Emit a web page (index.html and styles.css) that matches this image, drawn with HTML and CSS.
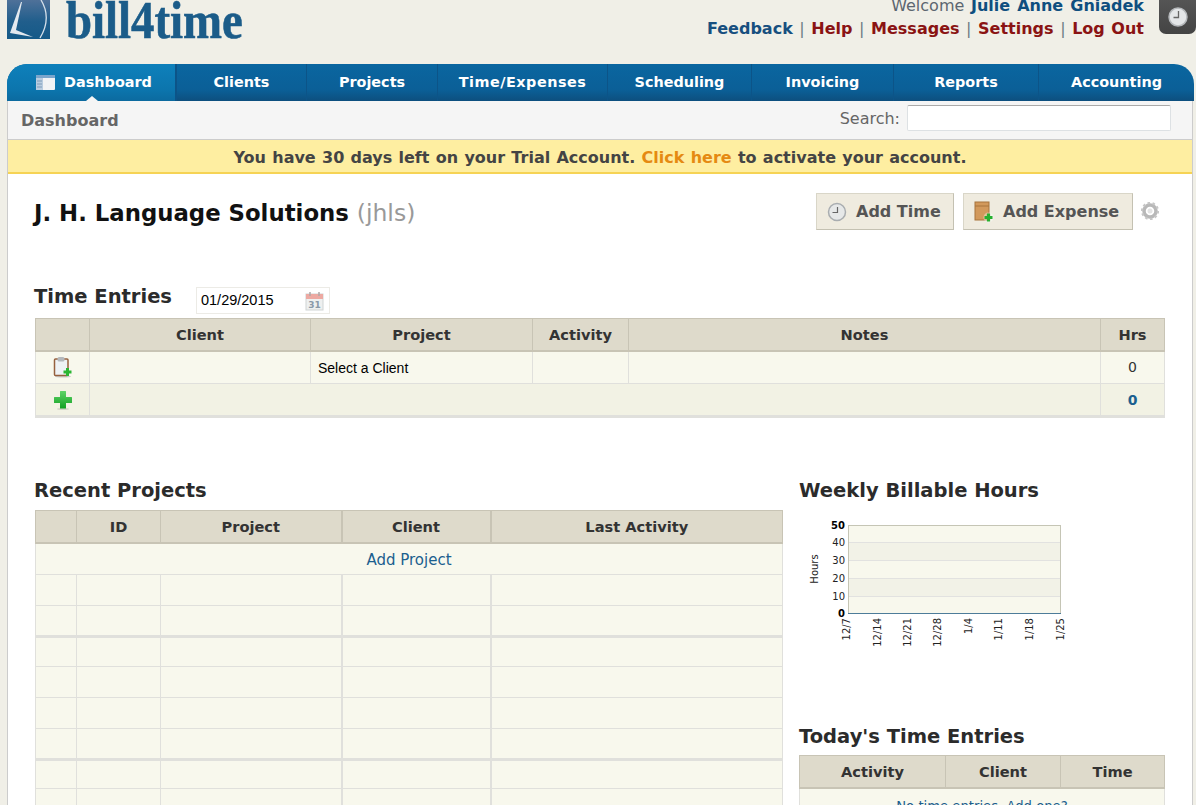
FILE: index.html
```html
<!DOCTYPE html>
<html lang="en">
<head>
<meta charset="utf-8">
<title>Bill4Time Dashboard</title>
<link rel="stylesheet" href="styles.css">
</head>
<body>
<div class="page">
  <header class="top">
    <div class="logo">
      <svg class="logo-mark" width="43" height="39" viewBox="0 0 43 39">
        <defs><linearGradient id="lg" x1="0" y1="0" x2="0" y2="1"><stop offset="0" stop-color="#4f7199"/><stop offset=".55" stop-color="#205e8c"/><stop offset="1" stop-color="#155a88"/></linearGradient></defs>
        <rect width="43" height="39" fill="url(#lg)"/>
        <path d="M34 0Q45 18 33 38" fill="none" stroke="#d5e0ea" stroke-width="1.300"/>
        <path d="M14 2L3 33L26 37L9 30L15 2Z" fill="#e3e9ef"/>
      </svg>
      <span class="logo-text">bill4time</span>
    </div>
    <div class="account">
      <div class="welcome">Welcome <b>Julie Anne Gniadek</b></div>
      <div class="links"><a class="blue">Feedback</a> <i>|</i> <a>Help</a> <i>|</i> <a>Messages</a> <i>|</i> <a>Settings</a> <i>|</i> <a>Log Out</a></div>
    </div>
    <div class="timer">
      <svg width="22" height="22" viewBox="0 0 22 22"><circle cx="11" cy="11" r="9" fill="#e4e6e8" stroke="#b5b8bb" stroke-width="1.500"/><path d="M11.500 5V11.500H6.500" fill="none" stroke="#666" stroke-width="1.300"/></svg>
    </div>
  </header>

  <nav class="tabs">
    <a class="tab active">
      <svg width="19" height="15" viewBox="0 0 19 15"><rect width="19" height="15" rx="1" fill="#f1f3f5"/><rect width="19" height="3" fill="#7aa5cc"/><rect y="3" width="7" height="12" fill="#b8cce0"/><path d="M1 6H6M1 9H6M1 12H6" stroke="#7e9cba"/></svg>
      Dashboard
    </a>
    <a class="tab">Clients</a>
    <a class="tab">Projects</a>
    <a class="tab tab-wide">Time/Expenses</a>
    <a class="tab">Scheduling</a>
    <a class="tab">Invoicing</a>
    <a class="tab">Reports</a>
    <a class="tab">Accounting</a>
  </nav>

  <div class="panel">
    <div class="subbar">
      <span class="crumb">Dashboard</span>
      <label class="search">Search: <input type="text"></label>
    </div>
    <div class="trial">You have 30 days left on your Trial Account. <a>Click here</a> to activate your account.</div>

    <main class="content">
      <div class="title-row">
        <h1>J. H. Language Solutions <span>(jhls)</span></h1>
        <div class="actions">
          <button class="btn btn-time">
            <svg width="20" height="20" viewBox="0 0 20 20"><circle cx="10" cy="10" r="8.500" fill="#e6e8e8" stroke="#a9adb0" stroke-width="1.500"/><path d="M10.500 5V10.500H5.500" fill="none" stroke="#666" stroke-width="1.200"/></svg>
            Add Time
          </button>
          <button class="btn btn-expense">
            <svg width="20" height="22" viewBox="0 0 20 22"><rect x="1" y="1" width="14" height="18" fill="#d2995c" stroke="#a8743c"/><path d="M1 5H15" stroke="#a8743c"/><circle cx="14.500" cy="16.500" r="5" fill="#fff" opacity=".4"/><path d="M14.500 12.500V20.500M10.500 16.500H18.500" stroke="#27b02f" stroke-width="3.200"/></svg>
            Add Expense
          </button>
          <svg class="gear" width="18" height="18" viewBox="0 0 18 18"><circle cx="9" cy="9" r="6" fill="none" stroke="#b8b8b8" stroke-width="3.500"/><circle cx="9" cy="9" r="8" fill="none" stroke="#c6c6c6" stroke-width="2.200" stroke-dasharray="2.500 2.500"/><circle cx="9" cy="9" r="2.500" fill="#e4e4e4"/></svg>
        </div>
      </div>

      <section class="entries">
        <div class="entries-head">
          <h2>Time Entries</h2>
          <div class="date">01/29/2015
            <svg width="19" height="20" viewBox="0 0 19 20"><rect x="1" y="3" width="17" height="16" fill="#eef0f0" stroke="#d0d4d4"/><rect x="1" y="3" width="17" height="5" fill="#eda9a2"/><path d="M5 1V5M14 1V5" stroke="#b0a8a8" stroke-width="1.500"/><text x="9.500" y="17" class="cal-day">31</text></svg>
          </div>
        </div>
        <table class="grid grid-entries">
          <colgroup><col class="e1"><col class="e2"><col class="e3"><col class="e4"><col class="e5"><col class="e6"></colgroup>
          <thead><tr><th></th><th>Client</th><th>Project</th><th>Activity</th><th>Notes</th><th>Hrs</th></tr></thead>
          <tbody>
            <tr class="entry">
              <td class="ico"><svg width="20" height="22" viewBox="0 0 20 22"><ellipse cx="10" cy="20.500" rx="8" ry="1" fill="#ccc"/><rect x="1.500" y="3" width="13.500" height="16.500" rx="1" fill="#eef2f5" stroke="#96603e" stroke-width="1.500"/><rect x="4.500" y="1" width="7" height="4.500" rx="1.500" fill="#b4b8bc"/><path d="M14.500 12V20M10.500 16H18.500" stroke="#2bb534" stroke-width="3"/></svg></td>
              <td></td>
              <td class="plain">Select a Client</td>
              <td></td>
              <td></td>
              <td class="num">0</td>
            </tr>
            <tr class="total">
              <td class="ico"><svg width="20" height="20" viewBox="0 0 20 20"><defs><linearGradient id="pg" x1="0" y1="0" x2="0" y2="1"><stop offset="0" stop-color="#5fd468"/><stop offset="1" stop-color="#12a022"/></linearGradient></defs><ellipse cx="10" cy="19" rx="6" ry="1" fill="#d4d4c8"/><path d="M7 1.500Q7 1 7.500 1H12.500Q13 1 13 1.500V7H18.500Q19 7 19 7.500V12.500Q19 13 18.500 13H13V18.500H7V13H1.500Q1 13 1 12.500V7.500Q1 7 1.500 7H7Z" fill="url(#pg)"/></svg></td>
              <td colspan="4"></td>
              <td class="num sum">0</td>
            </tr>
          </tbody>
        </table>
      </section>

      <div class="lower">
        <section class="recent">
          <h2>Recent Projects</h2>
          <table class="grid grid-recent">
            <colgroup><col class="r1"><col class="r2"><col class="r3"><col class="r4"><col class="r5"></colgroup>
            <thead><tr><th></th><th>ID</th><th>Project</th><th>Client</th><th>Last Activity</th></tr></thead>
            <tbody>
              <tr class="add"><td colspan="5"><a>Add Project</a></td></tr>
              <tr><td></td><td></td><td></td><td></td><td></td></tr>
              <tr><td></td><td></td><td></td><td></td><td></td></tr>
              <tr class="thick"><td></td><td></td><td></td><td></td><td></td></tr>
              <tr><td></td><td></td><td></td><td></td><td></td></tr>
              <tr><td></td><td></td><td></td><td></td><td></td></tr>
              <tr><td></td><td></td><td></td><td></td><td></td></tr>
              <tr class="thick"><td></td><td></td><td></td><td></td><td></td></tr>
              <tr><td></td><td></td><td></td><td></td><td></td></tr>
            </tbody>
          </table>
        </section>

        <aside class="side">
          <h2>Weekly Billable Hours</h2>
          <svg class="chart" width="280" height="140" viewBox="0 0 280 140">
            <rect x="48.500" y="15.500" width="212" height="88" fill="#f8f8ed" stroke="#c5c5b5"/>
            <rect x="49" y="33" width="211" height="18" fill="#f2f2e7"/>
            <rect x="49" y="69" width="211" height="18" fill="#f2f2e7"/>
            <path d="M49 32.500H260M49 50.500H260M49 68.500H260M49 86.500H260" stroke="#e2e2e0"/>
            <path d="M48 103.500H261" stroke="#4d7c99"/>
            <g class="yl">
              <text x="45" y="19" class="strong">50</text>
              <text x="45" y="36">40</text>
              <text x="45" y="54">30</text>
              <text x="45" y="72">20</text>
              <text x="45" y="90">10</text>
              <text x="45" y="107" class="strong">0</text>
            </g>
            <text class="yt" transform="translate(18 59) rotate(-90)">Hours</text>
            <g class="xl">
              <text transform="translate(50 108) rotate(-90)">12/7</text>
              <text transform="translate(81 108) rotate(-90)">12/14</text>
              <text transform="translate(111 108) rotate(-90)">12/21</text>
              <text transform="translate(141 108) rotate(-90)">12/28</text>
              <text transform="translate(172 108) rotate(-90)">1/4</text>
              <text transform="translate(202 108) rotate(-90)">1/11</text>
              <text transform="translate(233 108) rotate(-90)">1/18</text>
              <text transform="translate(264 108) rotate(-90)">1/25</text>
            </g>
          </svg>
          <h2 class="today">Today's Time Entries</h2>
          <table class="grid grid-today">
            <colgroup><col class="t1"><col class="t2"><col class="t3"></colgroup>
            <thead><tr><th>Activity</th><th>Client</th><th>Time</th></tr></thead>
            <tbody><tr class="add none"><td colspan="3"><a>No time entries. Add one?</a></td></tr></tbody>
          </table>
        </aside>
      </div>
    </main>
  </div>
</div>
</body>
</html>
```
FILE: styles.css
```css
* { box-sizing: border-box; }
html, body { margin: 0; height: 805px; overflow: hidden; }
body { background: #f0efe7; font-family: "DejaVu Sans", Verdana, sans-serif; color: #333; }
.page { width: 1196px; height: 805px; overflow: hidden; }

/* header */
.top { height: 64px; display: flex; position: relative; }
.logo { display: flex; align-items: flex-start; margin-left: 7px; height: 39px; width: 240px; overflow: hidden; flex: none; }
.logo-mark { flex: none; }
.logo-text { font-family: "Liberation Serif", serif; font-weight: 700; font-size: 52px; line-height: 39px; color: #1b5c89; -webkit-text-stroke: .6px #1b5c89; margin-left: 16px; margin-top: 1px; transform: scaleX(.9); transform-origin: left center; white-space: nowrap; }
.account { margin-left: auto; margin-right: 15px; text-align: right; }
.welcome { font-size: 16px; line-height: 20px; margin-top: -4px; color: #5c6670; word-spacing: 1.500px; }
.welcome b { color: #0f4f7f; }
.links { font-size: 16px; line-height: 20px; margin-top: 3px; font-weight: 700; color: #8a1313; word-spacing: 1px; }
.links a { color: #8a1313; }
.links a.blue { color: #174f7f; }
.links i { font-style: normal; font-weight: 400; color: #6c7a84; }
.timer { width: 37px; height: 34px; flex: none; background: linear-gradient(#555, #444); border-radius: 0 0 7px 7px; display: flex; align-items: center; justify-content: center; }

/* tabs */
.tabs { margin-left: 7px; width: 1187px; height: 37px; display: grid; grid-template-columns: 169px 130px 131px 170px 144px 142px 145px 156px; border-radius: 20px 20px 0 0; overflow: hidden; background: linear-gradient(#0a66a0, #0b5f97 70%, #0d4f7e); }
.tab { display: flex; align-items: center; justify-content: center; gap: 9px; color: #fff; font-size: 14.400px; font-weight: 700; border-left: 1px solid #0c5488; padding-bottom: 1px; }
.tab:first-child { border-left: 0; }
.tab-wide { letter-spacing: .5px; }
.tab.active { background: linear-gradient(#0e80bb, #0c75ad 70%, #0c6a9f); position: relative; border-right: 1px solid #0c5488; padding-left: 6px; }
.tab.active::after { content: ""; position: absolute; left: 79px; bottom: 0; border: 6px solid transparent; border-top: 0; border-bottom: 5px solid #f5f5f5; }

/* panel */
.panel { margin-left: 7px; width: 1186px; height: 704px; background: #fff; border-left: 1px solid #ccc; border-right: 1px solid #ccc; }
.subbar { height: 39px; background: #f5f5f5; border-bottom: 1px solid #ccc; display: flex; align-items: center; justify-content: space-between; padding: 0 21px 0 13px; }
.crumb { font-size: 16px; font-weight: 700; color: #666; }
.search { font-size: 16px; color: #666; display: flex; align-items: center; gap: 7px; margin-top: -4px; }
.search input { width: 264px; height: 26px; border: 1px solid #dde1e4; border-top-color: #aaa; border-radius: 2px; background: #fff; }
.trial { height: 34px; background: #feeea1; border-bottom: 2px solid #f6d354; text-align: center; font-size: 16px; font-weight: 700; line-height: 36px; color: #444; word-spacing: .7px; }
.trial a { color: #e58a12; }

.content { padding: 0 27px 0 26px; }
.title-row { height: 90px; display: flex; justify-content: space-between; }
h1 { margin: 23px 0 0; font-size: 22.800px; line-height: 32px; font-weight: 700; color: #111; }
h1 span { font-weight: 400; color: #999; font-size: 23.500px; }
.actions { display: flex; align-items: flex-start; margin-top: 19px; margin-right: 6px; }
.btn { height: 37px; border: 1px solid #d9d6c8; border-bottom-color: #c4c1b2; border-right-color: #c4c1b2; background: #efebdf; color: #555; font: 700 16px "DejaVu Sans", sans-serif; display: flex; align-items: center; gap: 9px; padding: 0 12px 0 10px; }
.btn-time { width: 138px; margin-right: 9px; }
.btn-expense { width: 170px; padding-left: 10px; }
.gear { margin: 9px 0 0 8px; }

h2 { margin: 0; font-size: 19.500px; line-height: 26px; font-weight: 700; color: #2b2b2b; }
.entries-head { height: 54px; display: flex; align-items: flex-start; padding-top: 20px; }
.entries-head h2 { margin-right: 24px; }
.date { width: 134px; height: 27px; margin-top: 3px; border: 1px solid #ecebe6; font: 14.500px/25px "Liberation Sans", sans-serif; color: #000; display: flex; justify-content: space-between; align-items: center; padding: 0 5px 0 4px; }
.cal-day { font: 700 9px "DejaVu Sans", sans-serif; fill: #8a9aa8; text-anchor: middle; }

.grid { border-collapse: collapse; table-layout: fixed; background: #f8f8ed; }
.grid th { background: #dedacb; border: 1px solid #c8c4b5; border-bottom: 2px solid #c8c4b5; font-size: 14.600px; font-weight: 700; color: #333; height: 32px; padding: 0; }
.grid-recent th, .grid-today th { padding-top: 1px; }
.grid td { border: 1px solid #e0e0dc; padding: 0; }
.grid-entries { width: 1129px; margin-left: 1px; }
.e1 { width: 54px; } .e2 { width: 221px; } .e3 { width: 222px; } .e4 { width: 96px; } .e5 { width: 472px; } .e6 { width: 64px; }
.entry td { height: 33px; }
.total td { height: 33px; background: #f2f2e4; border-bottom: 3px solid #e0e0dc; }
.ico { text-align: center; line-height: 0; }
.grid .plain { font: 14px "Liberation Sans", sans-serif; color: #000; padding: 2px 0 0 7px; }
.num { text-align: center; font: 14px "DejaVu Sans", sans-serif; color: #333; }
.sum { color: #1c5f8f; font-weight: 700; }

.lower { display: flex; margin-top: 58px; }
.recent { width: 765px; flex: none; }
.recent h2, .side h2 { height: 34px; padding-top: 2px; }
.grid-recent { width: 747px; margin-left: 1px; }
.r1 { width: 41px; } .r2 { width: 84px; } .r3 { width: 181px; } .r4 { width: 149px; } .r5 { width: 292px; }
.grid-recent td { height: 31px; }
.grid-recent th:nth-child(4), .grid-recent th:nth-child(5), .grid-recent tr td:nth-child(4), .grid-recent tr td:nth-child(5) { border-left-width: 2px; }
.grid-recent .thick td { border-top-width: 3px; height: 30px; }
.grid-recent .thick ~ .thick td { height: 29px; }
.add td { text-align: center; font-size: 15px; color: #1c5f8f; height: 32px; padding-top: 2px; }
.none td { font-size: 13.200px; height: 34px; padding-top: 4px; }
.side { flex: 1; }
.chart { display: block; margin-left: 1px; }
.yl text { font: 10px "DejaVu Sans", sans-serif; fill: #222; text-anchor: end; }
.yl text.strong { font-weight: 700; fill: #000; }
.yt { font: 10px "DejaVu Sans", sans-serif; fill: #222; text-anchor: middle; }
.xl text { font: 10px "DejaVu Sans", sans-serif; fill: #222; text-anchor: end; }
.side h2.today { margin-top: 71px; height: 34px; padding-top: 3px; }
.grid-today { width: 365px; }
.t1 { width: 146px; } .t2 { width: 115px; } .t3 { width: 104px; }
```
